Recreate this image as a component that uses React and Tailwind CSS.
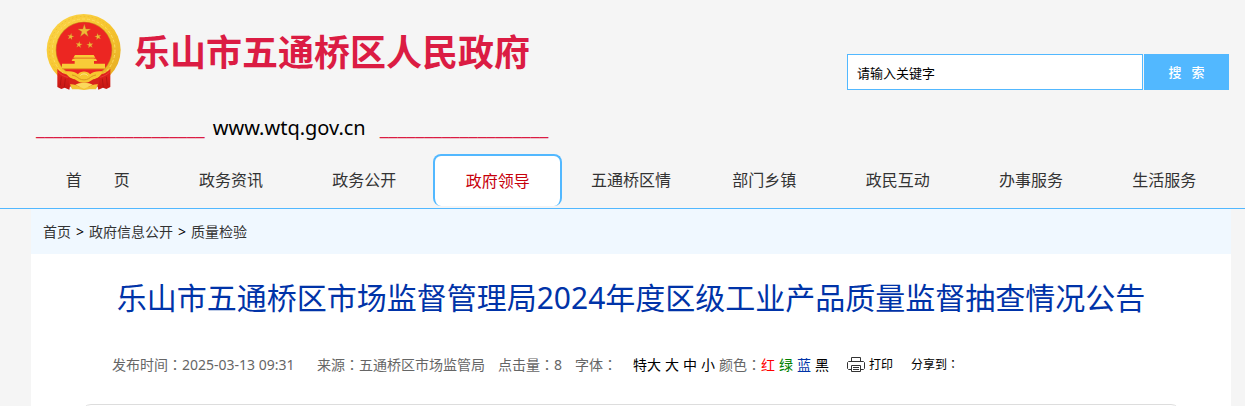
import React, { useState } from 'react';

const NAV_ITEMS = [
  '首\u2003\u2003页',
  '政务资讯',
  '政务公开',
  '政府领导',
  '五通桥区情',
  '部门乡镇',
  '政民互动',
  '办事服务',
  '生活服务',
];

const CRUMBS = ['首页', '政府信息公开', '质量检验'];

const FONT_SIZES = ['特大', '大', '中', '小'];

const COLORS = [
  { label: '红', className: 'text-[#ff0000]' },
  { label: '绿', className: 'text-[#008000]' },
  { label: '蓝', className: 'text-[#0033a8]' },
  { label: '黑', className: 'text-black' },
];

// Five-pointed star, radius 10, centred on the origin
const STAR = '0,-10 2.3,-3.1 9.5,-3.1 3.7,1.2 5.9,8.1 0,3.8 -5.9,8.1 -3.7,1.2 -9.5,-3.1 -2.3,-3.1';

const Emblem = () => (
  <svg viewBox="0 0 270 270" className="h-[90px] w-[90px] shrink-0" role="img" aria-label="国徽">
    <defs>
      <linearGradient id="gold" x1="0" y1="0" x2="1" y2="1">
        <stop offset="0" stopColor="#fbd64b" />
        <stop offset="0.5" stopColor="#f7c62f" />
        <stop offset="1" stopColor="#e3a822" />
      </linearGradient>
      <linearGradient id="drape" x1="0" y1="0" x2="0" y2="1">
        <stop offset="0" stopColor="#e8281f" />
        <stop offset="1" stopColor="#c41613" />
      </linearGradient>
    </defs>
    <ellipse cx="131" cy="126" rx="111" ry="108" fill="url(#gold)" />
    <ellipse cx="131" cy="126" rx="103" ry="101" fill="none" stroke="#e9b433" strokeWidth="2" strokeDasharray="5 7" />
    <ellipse cx="131" cy="126" rx="94" ry="93" fill="none" stroke="#fddc62" strokeWidth="3" strokeDasharray="9 6" />
    <circle cx="132" cy="126" r="85" fill="#d08a22" />
    <circle cx="132" cy="126" r="83" fill="#ec2622" />
    <g fill="#f0b936" stroke="#b5782a" strokeWidth="0.5">
      <polygon points={STAR} transform="translate(133 69) scale(2)" />
      <polygon points={STAR} transform="translate(92 86) scale(1.05) rotate(12)" />
      <polygon points={STAR} transform="translate(174 86) scale(1.05) rotate(-12)" />
      <polygon points={STAR} transform="translate(117 110) scale(1.05) rotate(8)" />
      <polygon points={STAR} transform="translate(150 111) scale(1.05) rotate(-8)" />
    </g>
    <g fill="#f8cc38">
      <path d="M105 141h56l5 8h-66z" />
      <path d="M103 149h60v3h-60z" fill="#e8ac28" />
      <path d="M98 152h70l3 7H95z" />
      <path d="M104 159h58v9h-58z" />
      <path d="M66 167h129v15H66z" />
      <path d="M66 181h131v3H66z" fill="#e39a22" />
    </g>
    <path d="M52 182c12 14 30 20 48 20l-8 14 12 12-14 7-2 10-14-6-10 4-12-6z" fill="url(#drape)" />
    <path d="M211 182c-12 14-30 20-48 20l8 14-12 12 14 7 2 10 14-6 10 4 12-6z" fill="url(#drape)" />
    <path d="M64 206l-3 26M76 212l-3 26M199 206l3 26M187 212l3 26" stroke="#a8120f" strokeWidth="2" fill="none" />
    <path d="M54 192c14 14 32 18 48 18M209 192c-14 14-32 18-48 18" stroke="#f04a42" strokeWidth="2" fill="none" />
    <path d="M84 205h96l-4 28-14 10h-60l-14-10z" fill="#d8211b" />
    <path
      d="M78 190c14-2 28 1 36 9 6-11 30-11 36 0 8-8 22-11 36-9-1 14-14 22-26 24l-10 6c-8 6-28 6-36 0l-10-6c-12-2-25-10-26-24z"
      fill="#f7c630"
    />
    <path d="M96 201c10 1 16 7 22 11 8 5 20 5 28 0 6-4 12-10 22-11" stroke="#d9951f" strokeWidth="3" fill="none" />
    <path d="M121 203c4-7 18-7 22 0" stroke="#fde588" strokeWidth="3" fill="none" />
    <path d="M90 229c10-1 20 2 28 7 6-8 22-8 28 0 8-5 18-8 28-7l-6 15h-19l-17 2-17-2H96z" fill="#f3c334" />
    <path d="M106 230c10-8 42-8 52 0l-14 7-12 5-12-5z" fill="#fbd95c" />
  </svg>
);

const PrinterIcon = () => (
  <svg
    viewBox="0 0 18 16"
    className="h-4 w-[18px]"
    fill="none"
    stroke="#333"
    strokeWidth="1"
    strokeLinejoin="round"
    aria-hidden="true"
  >
    <path d="M4.500 4.500v-4h9v4" />
    <path d="M4.500 12.500h-3l-1-1v-6l1-1h15l1 1v6l-1 1h-3" />
    <path d="M4.500 8.500h9v6h-9z" />
    <path d="M6 10.500h6M6 12.500h6" />
  </svg>
);

const Colon = () => <span className="font-['Noto_Sans_CJK_TC',sans-serif]">：</span>;

const App = () => {
  const [keyword, setKeyword] = useState('请输入关键字');

  return (
    <div className="h-screen overflow-hidden bg-[#f5f5f5] font-['Noto_Sans','Noto_Sans_CJK_SC',sans-serif] text-sm text-[#333]">
      <header className="border-b border-[#52b8ff] pl-[31px] pr-[14px]">
        <div className="flex items-start justify-between">
          <div>
            <div className="flex items-center pl-[9px] pt-2">
              <Emblem />
              <h1 className="ml-1 text-4xl font-bold text-[#db1c43]">乐山市五通桥区人民政府</h1>
            </div>
            <div className="flex pb-3 pl-[5px] pt-4 text-xl leading-7 text-[#db1c43]">
              <span>___________________</span>
              <span className="ml-2 mr-[14px] text-black">www.wtq.gov.cn</span>
              <span>___________________</span>
            </div>
          </div>
          <form className="mr-[2px] mt-[54px] flex gap-px" onSubmit={(e) => e.preventDefault()}>
            <input
              type="text"
              aria-label="搜索关键字"
              value={keyword}
              onChange={(e) => setKeyword(e.target.value)}
              className="h-9 w-[296px] border border-[#52b8ff] bg-white px-[9px] text-[13px] text-black outline-none"
            />
            <button type="submit" className="h-9 w-[85px] bg-[#52b8ff] text-[13px] font-medium text-white">
              搜&nbsp;&nbsp; 索
            </button>
          </form>
        </div>

        <nav className="grid grid-cols-9 pb-[2px] text-base">
          {NAV_ITEMS.map((item) => (
            <div key={item} className="flex h-[52px] justify-center">
              {item === '政府领导' ? (
                <a
                  href="#"
                  className="flex w-[129px] items-center justify-center rounded-lg border-2 border-b-0 border-[#52b8ff] bg-white text-[#c7000b]"
                >
                  {item}
                </a>
              ) : (
                <a href="#" className="flex items-center whitespace-nowrap">
                  {item}
                </a>
              )}
            </div>
          ))}
        </nav>
      </header>

      <div className="pl-[31px] pr-[14px]">
        <div className="flex h-[45px] items-center gap-[5px] bg-[#f0f8ff] px-3">
          {CRUMBS.map((crumb, i) => (
            <React.Fragment key={crumb}>
              {i > 0 && <span className="text-black">&gt;</span>}
              <a href="#">{crumb}</a>
            </React.Fragment>
          ))}
        </div>

        <main className="bg-white px-[50px] pt-[22px]">
          <h2 className="text-center text-3xl leading-[44px] text-[#0033a8]">
            乐山市五通桥区市场监督管理局2024年度区级工业产品质量监督抽查情况公告
          </h2>

          <div className="flex items-center whitespace-nowrap pb-[29px] pl-[31px] pt-[34px] leading-5 text-[#666]">
            <span className="w-[205px]">发布时间<Colon />2025-03-13 09:31</span>
            <span className="w-[181px]">来源<Colon />五通桥区市场监管局</span>
            <span className="w-[77px]">点击量<Colon />8</span>
            <span className="w-[58px]">字体<Colon /></span>
            <div className="flex gap-1 text-black">
              {FONT_SIZES.map((size) => (
                <button key={size} type="button">{size}</button>
              ))}
            </div>
            <span className="ml-1">颜色<Colon /></span>
            <div className="flex gap-1">
              {COLORS.map((color) => (
                <button key={color.label} type="button" className={color.className}>{color.label}</button>
              ))}
            </div>
            <button type="button" className="ml-[18px] flex items-center gap-1 text-xs leading-5 text-black">
              <PrinterIcon />
              打印
            </button>
            <span className="ml-[18px] text-xs leading-5 text-black">分享到<Colon /></span>
          </div>

          <div className="h-40 rounded-[10px] border border-[#ddd]" />
        </main>
      </div>
    </div>
  );
};

export default App;
